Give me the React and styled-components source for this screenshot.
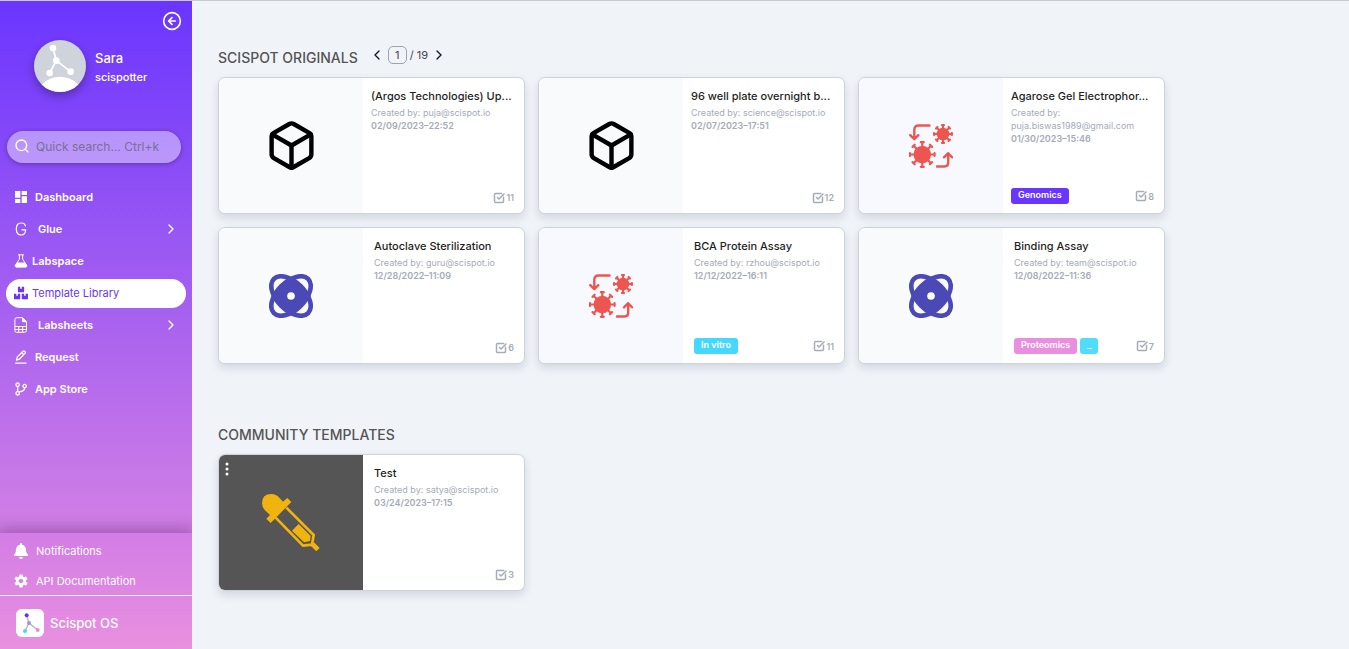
import React from "react";
import styled, { createGlobalStyle } from "styled-components";
import { FiBox, FiSearch } from "react-icons/fi";
import { MdDashboard } from "react-icons/md";
import { FaBell, FaBoxes } from "react-icons/fa";
import { BiGitBranch } from "react-icons/bi";
import { IoMdSettings } from "react-icons/io";
import { ChevronLeft, ChevronRight, CircleArrowLeft, SquareCheckBig } from "lucide-react";

const GlobalStyle = createGlobalStyle`
  * { box-sizing: border-box; }
  body {
    margin: 0;
    background: #f0f3f8;
    font-family: Inter, "Liberation Sans", sans-serif;
  }
  button, input { font-family: inherit; }
  h1, h2, h3, p, ul { margin: 0; padding: 0; }
`;

const Page = styled.div`
  display: flex;
  min-height: 100vh;
  border-top: 1px solid #c9cad0;
`;

const Sidebar = styled.aside`
  flex: 0 0 192px;
  min-width: 0;
  display: flex;
  flex-direction: column;
  color: #fff;
  background: linear-gradient(#6a35ff, #e990df);
`;

const CollapseRow = styled.div`
  display: flex;
  justify-content: flex-end;
  padding: 10px 10px 0;
`;

const IconButton = styled.button`
  display: flex;
  padding: 0;
  border: 0;
  background: none;
  color: inherit;
  cursor: pointer;
`;

const Profile = styled.div`
  display: flex;
  align-items: center;
  gap: 9px;
  padding: 9px 0 0 34px;
`;

const Avatar = styled.div`
  display: flex;
  width: 52px;
  height: 52px;
  border-radius: 50%;
  overflow: hidden;
  box-shadow: 0 4px 10px rgba(0, 0, 0, 0.3);
`;

const UserText = styled.div`
  padding-top: 2px;
`;

const UserName = styled.p`
  font-size: 13px;
  font-weight: 500;
  line-height: 20px;
`;

const UserRole = styled.p`
  font-size: 11px;
  font-weight: 500;
  line-height: 18px;
`;

const SearchBox = styled.label`
  display: flex;
  align-items: center;
  gap: 6px;
  height: 32px;
  margin: 39px 11px 0 7px;
  padding: 0 7px 2px;
  border-radius: 16px;
  background: rgba(255, 255, 255, 0.42);
  box-shadow: 0 1px 5px rgba(0, 0, 0, 0.3);
  svg { flex: none; }
`;

const SearchInput = styled.input`
  flex: 1;
  min-width: 0;
  padding: 0;
  border: 0;
  outline: 0;
  background: none;
  color: #fff;
  font-size: 12px;
  &::placeholder { color: #7a6f96; opacity: 1; }
`;

const Nav = styled.nav`
  display: flex;
  flex-direction: column;
  gap: 3px;
  margin: 20px 6px 0;
`;

const NavLink = styled.a`
  display: flex;
  align-items: center;
  height: 29px;
  padding: 0 7px 2px;
  border-radius: 15px;
  font-size: 11px;
  font-weight: ${(p) => (p.$active ? 400 : 600)};
  color: ${(p) => (p.$active ? "#6a35ff" : "#fff")};
  background: ${(p) => (p.$active ? "#fff" : "transparent")};
  text-decoration: none;
`;

const NavIcon = styled.span`
  display: flex;
  justify-content: center;
  width: 16px;
  margin-right: ${(p) => p.$gap}px;
`;

const NavLabel = styled.span`
  flex: 1;
`;

const SidebarFooter = styled.div`
  margin-top: auto;
  box-shadow: 0 0 16px 4px rgba(50, 0, 70, 0.32);
  clip-path: inset(-24px 0 0 0);
`;

const FooterPanel = styled.div`
  background: linear-gradient(#d27de6, #e990df);
`;

const FooterLinks = styled.div`
  display: flex;
  flex-direction: column;
  padding: 2px 13px 0;
  border-bottom: 1px solid #fff;
`;

const FooterLink = styled.a`
  display: flex;
  align-items: center;
  gap: 7px;
  height: 30px;
  padding-top: 2px;
  color: #fff;
  font-size: 11px;
  text-decoration: none;
`;

const Brand = styled.div`
  display: flex;
  align-items: center;
  gap: 6px;
  height: 53px;
  padding: 0 16px;
  font-size: 13px;
  font-weight: 500;
`;

const Main = styled.main`
  flex: 1;
  min-width: 0;
  padding: 45px 26px 40px;
`;

const Section = styled.section`
  & + & { margin-top: 59px; }
`;

const SectionHead = styled.div`
  display: flex;
  gap: 11px;
  height: 31px;
`;

const SectionTitle = styled.h2`
  padding-top: 2px;
  color: #555;
  font-size: 14px;
  font-weight: 500;
  line-height: 20px;
`;

const Pager = styled.div`
  display: flex;
  align-items: center;
  gap: 3px;
  height: 18px;
  color: #445;
  font-size: 11px;
  svg { color: #111827; }
`;

const PageInput = styled.input`
  width: 19px;
  height: 18px;
  padding: 0;
  border: 1px solid #9ca3b5;
  border-radius: 5px;
  background: transparent;
  color: #445;
  font-size: 11px;
  text-align: center;
`;

const Cards = styled.div`
  display: grid;
  grid-template-columns: repeat(auto-fill, 307px);
  gap: 13px;
`;

const CardBox = styled.article`
  display: flex;
  height: 137px;
  border: 1px solid #ced2db;
  border-radius: 7px;
  overflow: hidden;
  background: #fff;
  box-shadow: 0 4px 8px rgba(30, 40, 70, 0.14);
`;

const Thumb = styled.div`
  position: relative;
  flex: 0 0 144px;
  display: flex;
  align-items: center;
  justify-content: center;
  background: ${(p) => p.$tone};
`;

const MoreButton = styled(IconButton)`
  position: absolute;
  top: 7px;
  left: 5px;
`;

const CardBody = styled.div`
  flex: 1;
  min-width: 0;
  display: flex;
  flex-direction: column;
  padding: 10px 10px 9px ${(p) => (p.$wide ? 8 : 11)}px;
`;

const CardTitle = styled.h3`
  color: #1f1f1f;
  font-size: 11px;
  font-weight: 500;
  line-height: 16px;
  margin-bottom: 2px;
  white-space: nowrap;
`;

const Meta = styled.p`
  color: #a5abb8;
  font-size: 9px;
  font-weight: ${(p) => (p.$strong ? 600 : 400)};
  line-height: 13px;
`;

const CardFoot = styled.div`
  display: flex;
  align-items: center;
  gap: 3px;
  margin-top: auto;
`;

const Tag = styled.span`
  height: 16px;
  padding: 0 7px;
  border-radius: 3px;
  background: ${(p) => p.$color};
  color: #fff;
  font-size: 9px;
  font-weight: 600;
  line-height: 14px;
`;

const Count = styled.span`
  display: flex;
  align-items: center;
  gap: 1px;
  margin-left: auto;
  color: #a5abb8;
  font-size: 9px;
  font-weight: 600;
  line-height: 13px;
`;

const GlueIcon = () => (
  <svg width="12" height="14" viewBox="0 0 12 14" fill="none" stroke="currentColor" strokeWidth="1.2">
    <path d="M10.500 4.500Q10.300 1 6.200 1Q1.300 1 1.300 7Q1.300 13 6.200 13Q10.600 13 10.600 7.800H6.500" />
  </svg>
);

const FlaskIcon = () => (
  <svg width="14" height="14" viewBox="0 0 14 14">
    <path d="M4 .8h6M5.4 1v4.2L1.3 11.2Q.7 13 2.2 13h9.6q1.5 0 .9-1.8L8.6 5.2V1" fill="none" stroke="currentColor" />
    <path d="M3.4 8.4h7.2l2.2 3.2q.3 1.6-1 1.6H2.2q-1.4 0-1-1.6z" fill="currentColor" />
  </svg>
);

const SheetIcon = () => (
  <svg width="14" height="16" viewBox="0 0 14 16" fill="none" stroke="currentColor">
    <path d="M3 .7h5.5l4 4V13.5q0 1.8-1.8 1.8H2.5Q.9 15.300 .9 13.500V2.500Q.9.7 3 .7zM1 9.500h11.500M1 12.500h11.500M4.800 9.500v5.500M8.700 9.500v5.500" />
    <path d="M8.500.7v4h4z" fill="currentColor" />
  </svg>
);

const RequestIcon = () => (
  <svg width="14" height="14" viewBox="0 0 14 14" fill="none" stroke="currentColor" strokeWidth="1.300" strokeLinejoin="round">
    <path d="M2.500 10.200L3.300 7L9 1.300Q9.900.500 10.900 1.400Q11.800 2.400 10.900 3.400L5.300 9.200ZM7.800 2.700L9.500 4.500M1.200 13.200H12.500" />
  </svg>
);

const AvatarArt = () => (
  <svg width="52" height="52" viewBox="102 120 156 156">
    <rect x="102" y="120" width="156" height="156" fill="#cfd3dc" />
    <circle cx="180" cy="304" r="74" fill="#fff" />
    <path d="M159 144L169 182L149 219M169 182L212 215" stroke="#fff" strokeWidth="5" fill="none" />
    <g fill="#fff">
      <circle cx="159" cy="144" r="10" />
      <circle cx="169" cy="182" r="10" />
      <circle cx="149" cy="219" r="10" />
      <circle cx="212" cy="215" r="10" />
    </g>
  </svg>
);

const BrandLogo = () => (
  <svg width="28" height="28" viewBox="0 0 84 84">
    <rect width="84" height="84" rx="17" fill="#fff" />
    <path d="M32 19L39 42L27 66M39 42L65 63" stroke="#b4b4c0" strokeWidth="4" fill="none" />
    <circle cx="32" cy="19" r="6" fill="#5b35ff" />
    <circle cx="39" cy="42" r="6" fill="#a48cf5" />
    <circle cx="27" cy="66" r="6" fill="#45d8ff" />
    <circle cx="65" cy="63" r="6" fill="#e98bdc" />
  </svg>
);

const Virus = ({ x, y, core, reach, cap }) => (
  <g transform={`translate(${x} ${y})`}>
    <circle r={core} fill="currentColor" />
    {[0, 45, 90, 135, 180, 225, 270, 315].map((angle) => (
      <path
        key={angle}
        d={`M0 0V${-reach}M${-cap} ${-reach}H${cap}`}
        transform={`rotate(${angle})`}
        stroke="currentColor"
        strokeWidth="2.200"
        strokeLinecap="round"
      />
    ))}
  </g>
);

const VirusIcon = () => (
  <svg width="44" height="44" viewBox="0 0 44 44" color="#ed5650" fill="none">
    <Virus x={34} y={10} core={6.3} reach={8.9} cap={1} />
    <Virus x={13.3} y={30.500} core={8.800} reach={12.300} cap={1.500} />
    <path
      d="M20.500 1.500H9.500Q5.300 1.500 5.300 5.700V15M1.200 11.200L5.300 15.200L9.300 11.200M28 42.500H35.500Q39.200 42.500 39.200 38.500V29.500M35 33.300L39.200 29.200L43 33.300"
      stroke="currentColor"
      strokeWidth="2.400"
      strokeLinecap="round"
      strokeLinejoin="round"
    />
  </svg>
);

const AtomIcon = () => (
  <svg width="44" height="44" viewBox="-22 -22 44 44">
    <g fill="none" stroke="#4b49b6" strokeWidth="4.600">
      <ellipse rx="24.200" ry="13.800" transform="rotate(45)" />
      <ellipse rx="24.200" ry="13.800" transform="rotate(-45)" />
    </g>
    <rect x="-13" y="-13" width="26" height="26" rx="5" fill="#4b49b6" transform="rotate(45)" />
    <circle r="3.800" fill="#fff" />
  </svg>
);

const PipetteIcon = () => (
  <svg width="60" height="60" viewBox="168 216 180 180" color="#f1b30e">
    <path d="M199 219Q213 219 223 230L234 242L247 231L259 243L197 306L184 293L195 282L180 268Q171 258 171 247Q171 219 199 219Z" fill="currentColor" />
    <path d="M212 290L294 374L321 371L326 342L244 260" fill="none" stroke="currentColor" strokeWidth="8" />
    <path d="M322 369L339 386" stroke="currentColor" strokeWidth="14" />
    <path d="M281 309L317 345L315 360L297 364L261 329Z" fill="currentColor" />
  </svg>
);

const DotsIcon = () => (
  <svg width="6" height="14" viewBox="0 0 6 14" fill="#fff">
    <circle cx="3" cy="2" r="1.500" />
    <circle cx="3" cy="7" r="1.500" />
    <circle cx="3" cy="12" r="1.500" />
  </svg>
);

const navItems = [
  { label: "Dashboard", icon: <MdDashboard size={16} />, gap: 6 },
  { label: "Glue", icon: <GlueIcon />, gap: 9, more: true },
  { label: "Labspace", icon: <FlaskIcon />, gap: 3 },
  { label: "Template Library", icon: <FaBoxes size={14} />, gap: 3, active: true },
  { label: "Labsheets", icon: <SheetIcon />, gap: 9, more: true },
  { label: "Request", icon: <RequestIcon />, gap: 6 },
  { label: "App Store", icon: <BiGitBranch size={16} />, gap: 6 },
];

const art = {
  cube: { tone: "#f9fafc", icon: <FiBox size={53} color="#000" /> },
  virus: { tone: "#f8f9ff", icon: <VirusIcon /> },
  atom: { tone: "#f9fafc", icon: <AtomIcon /> },
  pipette: { tone: "#555", icon: <PipetteIcon /> },
};

const originals = [
  { title: "(Argos Technologies) Up...", by: "puja@scispot.io", date: "02/09/2023–22:52", count: 11, kind: "cube", wide: true },
  { title: "96 well plate overnight b...", by: "science@scispot.io", date: "02/07/2023–17:51", count: 12, kind: "cube", wide: true },
  { title: "Agarose Gel Electrophor...", by: "puja.biswas1989@gmail.com", date: "01/30/2023–15:46", count: 8, kind: "virus", wide: true, tags: [["Genomics", "#6a35ff"]] },
  { title: "Autoclave Sterilization", by: "guru@scispot.io", date: "12/28/2022–11:09", count: 6, kind: "atom" },
  { title: "BCA Protein Assay", by: "rzhou@scispot.io", date: "12/12/2022–16:11", count: 11, kind: "virus", tags: [["In vitro", "#45d8ff"]] },
  { title: "Binding Assay", by: "team@scispot.io", date: "12/08/2022–11:36", count: 7, kind: "atom", tags: [["Proteomics", "#e98fe0"], ["_", "#4fdcff"]] },
];

const community = [
  { title: "Test", by: "satya@scispot.io", date: "03/24/2023–17:15", count: 3, kind: "pipette", menu: true },
];

function TemplateCard({ title, by, date, count, kind, wide, tags = [], menu }) {
  return (
    <CardBox>
      <Thumb $tone={art[kind].tone}>
        {art[kind].icon}
        {menu && (
          <MoreButton aria-label="Template options">
            <DotsIcon />
          </MoreButton>
        )}
      </Thumb>
      <CardBody $wide={wide}>
        <CardTitle>{title}</CardTitle>
        <Meta>Created by: {by}</Meta>
        <Meta $strong>{date}</Meta>
        <CardFoot>
          {tags.map(([name, color]) => (
            <Tag key={name} $color={color}>{name}</Tag>
          ))}
          <Count>
            <SquareCheckBig size={12} strokeWidth={3} />
            {count}
          </Count>
        </CardFoot>
      </CardBody>
    </CardBox>
  );
}

export default function App() {
  return (
    <>
      <GlobalStyle />
      <Page>
        <Sidebar>
          <CollapseRow>
            <IconButton aria-label="Collapse sidebar">
              <CircleArrowLeft size={20} />
            </IconButton>
          </CollapseRow>
          <Profile>
            <Avatar><AvatarArt /></Avatar>
            <UserText>
              <UserName>Sara</UserName>
              <UserRole>scispotter</UserRole>
            </UserText>
          </Profile>
          <SearchBox>
            <FiSearch size={16} aria-hidden="true" />
            <SearchInput aria-label="Quick search" placeholder="Quick search... Ctrl+k" />
          </SearchBox>
          <Nav>
            {navItems.map((item) => (
              <NavLink key={item.label} href="#" $active={item.active}>
                <NavIcon $gap={item.gap}>{item.icon}</NavIcon>
                <NavLabel>{item.label}</NavLabel>
                {item.more && <ChevronRight size={16} />}
              </NavLink>
            ))}
          </Nav>
          <SidebarFooter>
            <FooterPanel>
              <FooterLinks>
                <FooterLink href="#"><FaBell size={16} />Notifications</FooterLink>
                <FooterLink href="#"><IoMdSettings size={16} />API Documentation</FooterLink>
              </FooterLinks>
              <Brand><BrandLogo />Scispot OS</Brand>
            </FooterPanel>
          </SidebarFooter>
        </Sidebar>
        <Main>
          <Section>
            <SectionHead>
              <SectionTitle>SCISPOT ORIGINALS</SectionTitle>
              <Pager>
                <IconButton aria-label="Previous page"><ChevronLeft size={16} /></IconButton>
                <PageInput aria-label="Page" defaultValue="1" />
                <span>/ 19</span>
                <IconButton aria-label="Next page"><ChevronRight size={16} /></IconButton>
              </Pager>
            </SectionHead>
            <Cards>
              {originals.map((card) => <TemplateCard key={card.title} {...card} />)}
            </Cards>
          </Section>
          <Section>
            <SectionHead>
              <SectionTitle>COMMUNITY TEMPLATES</SectionTitle>
            </SectionHead>
            <Cards>
              {community.map((card) => <TemplateCard key={card.title} {...card} />)}
            </Cards>
          </Section>
        </Main>
      </Page>
    </>
  );
}
